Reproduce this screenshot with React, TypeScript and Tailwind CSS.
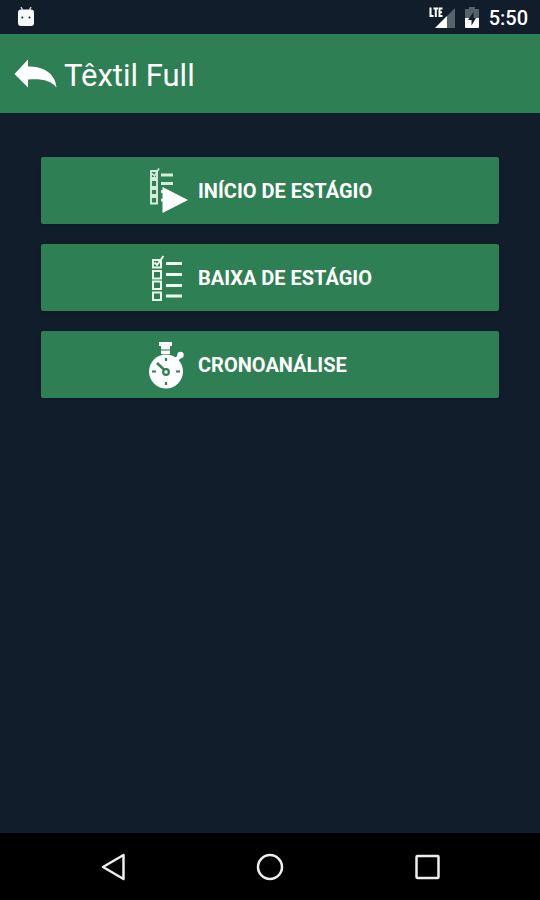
import type { ReactNode } from "react";

function RobotIcon() {
  return (
    <svg width="18" height="22" viewBox="0 0 18 22" aria-hidden="true">
      <path d="M4 1l1.500 3M14 1l-1.500 3" stroke="#c9ced3" strokeWidth="1.500" />
      <rect x="1" y="3.500" width="16" height="16.500" rx="3" fill="#f7f8fa" />
      <circle cx="5.300" cy="11.500" r="1" fill="#111d2a" />
      <circle cx="12.500" cy="11.500" r="1" fill="#111d2a" />
    </svg>
  );
}

function BackArrowIcon() {
  return (
    <svg width="44" height="30" viewBox="0 0 44 30" aria-hidden="true">
      <path d="M0.500 15L14 0.500V7.500C28 7.500 41 13 42.500 28.500C37 21.500 28 19.500 14 20.500V28.500Z" fill="#fff" />
    </svg>
  );
}

function SignalIcon() {
  return (
    <svg width="26" height="22" viewBox="0 0 26 22" aria-hidden="true">
      <path d="M26 2V22H6Z" fill="#57616b" />
      <path d="M18 10V22H6Z" fill="#fff" />
      <path d="M0 0H14V12H0Z" fill="#111d2a" />
      <path d="M1.500 1.500V10H4.500M4.500 2.500H9M6.800 2.500V11M13.500 2.500H10.500V10H13.500M10.500 6.200H13" stroke="#fff" strokeWidth="2" fill="none" />
    </svg>
  );
}

function BatteryIcon() {
  return (
    <svg width="14" height="22" viewBox="0 0 14 22" aria-hidden="true">
      <path d="M4 1H10V3H14V12H0V3H4Z" fill="#57616b" />
      <path d="M0 12H14V21Q14 22 13 22H1Q0 22 0 21Z" fill="#fff" />
      <path d="M8.500 6L3 14H6.500V19.500L11 12H8.500Z" fill="#111d2a" />
    </svg>
  );
}

function ChecklistIcon() {
  return (
    <svg width="40" height="48" viewBox="0 0 40 48" fill="none" stroke="#eefaf0" aria-hidden="true">
      <path d="M5 6H13V13.500H5ZM5 17H13V24.500H5ZM5 27.500H13V35H5ZM5 38.500H13V46H5Z" strokeWidth="2" />
      <path d="M6.500 8.500L9 11L15.500 2" strokeWidth="2" />
      <path d="M18 9.500H34M18 20.500H34M18 31.500H34M18 42H34" strokeWidth="3" />
    </svg>
  );
}

function StartChecklistIcon() {
  return (
    <svg width="40" height="48" viewBox="0 0 40 48" fill="none" stroke="#d5ecdb" aria-hidden="true">
      <path d="M3 4H9V11H3ZM3 13H9V20H3ZM3 22H9V28H3ZM3 30H9V36.500H3Z" strokeWidth="1.900" />
      <path d="M4 6.500L6.500 9L11 1.500" strokeWidth="1.700" />
      <path d="M13 8H25M13 16.500H25" strokeWidth="3" />
      <path d="M13 24.500H16M13 33H16" strokeWidth="3" />
      <path d="M14.500 20L40 33L14.500 46Z" fill="#fff" stroke="none" />
    </svg>
  );
}

function StopwatchIcon() {
  return (
    <svg width="40" height="48" viewBox="0 0 40 48" aria-hidden="true">
      <path d="M11 1H24V5H22V13H13V5H11Z" fill="#fff" />
      <path d="M13 9H22" stroke="#8dbb9f" strokeWidth="2" />
      <path d="M28 19L33 14" stroke="#fff" strokeWidth="4" />
      <circle cx="32.500" cy="14" r="3.200" fill="#fff" />
      <circle cx="18" cy="30.500" r="17" fill="#fff" />
      <path d="M18 17V20M18 41V44M4 30.500H8M28 30.500H32" stroke="#2f7f54" strokeWidth="2.200" />
      <path d="M9 22L16.500 29" stroke="#2f7f54" strokeWidth="2.500" />
      <circle cx="18" cy="31" r="2.800" fill="#fff" stroke="#2f7f54" strokeWidth="2.200" />
    </svg>
  );
}

function MenuButton({ icon, label }: { icon: ReactNode; label: string }) {
  return (
    <button
      type="button"
      className="flex h-[67px] w-full items-center gap-2.5 rounded-xs bg-[#2f7f54] pl-[107px] text-left text-xl font-bold text-white shadow"
    >
      {icon}
      {label}
    </button>
  );
}

export default function App() {
  return (
    <div className="flex min-h-screen flex-col bg-[#111d2a] font-[Roboto,sans-serif] text-white">
      <div className="flex h-[34px] items-center justify-between pr-3 pl-[17px]">
        <RobotIcon />
        <div className="flex items-center gap-2.5">
          <SignalIcon />
          <BatteryIcon />
          <span className="pt-0.5 text-xl leading-6 font-medium">5:50</span>
        </div>
      </div>

      <header className="flex h-[79px] items-center gap-1.5 bg-[#2f7f54] px-3.5">
        <button type="button" aria-label="Voltar">
          <BackArrowIcon />
        </button>
        <h1 className="pt-1 text-[31px] leading-10">Têxtil Full</h1>
      </header>

      <main className="flex flex-1 flex-col gap-5 px-[41px] pt-11">
        <MenuButton icon={<StartChecklistIcon />} label="INÍCIO DE ESTÁGIO" />
        <MenuButton icon={<ChecklistIcon />} label="BAIXA DE ESTÁGIO" />
        <MenuButton icon={<StopwatchIcon />} label="CRONOANÁLISE" />
      </main>

      <nav className="flex h-[67px] justify-center bg-black">
        <div className="grid w-[87%] grid-cols-3 place-items-center">
          <button type="button" aria-label="Voltar">
            <svg width="28" height="28" viewBox="0 0 28 28" fill="none" stroke="#eee" strokeWidth="2.500" strokeLinejoin="round">
              <path d="M24.500 2V26L4 14Z" />
            </svg>
          </button>
          <button type="button" aria-label="Início">
            <svg width="28" height="28" viewBox="0 0 28 28" fill="none" stroke="#eee" strokeWidth="2.500">
              <circle cx="14" cy="14" r="12" />
            </svg>
          </button>
          <button type="button" aria-label="Recentes">
            <svg width="28" height="28" viewBox="0 0 28 28" fill="none" stroke="#eee" strokeWidth="2.500">
              <rect x="3.500" y="3" width="22" height="22" rx="1" />
            </svg>
          </button>
        </div>
      </nav>
    </div>
  );
}
